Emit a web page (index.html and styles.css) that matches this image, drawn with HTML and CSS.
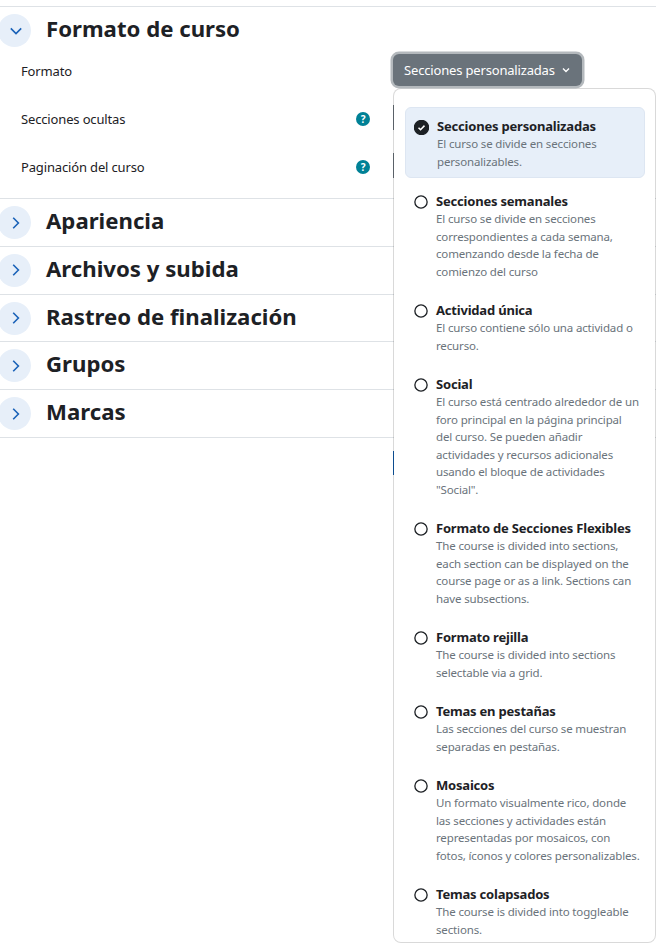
FILE: index.html
```html
<!DOCTYPE html>
<html lang="es">
<head>
  <meta charset="UTF-8" />
  <title>Formato de curso</title>
  <link rel="stylesheet" href="styles.css">
</head>
<body>

<main class="settings">
  <section class="group open">
    <div class="group-head">
      <span class="toggle"><svg viewBox="0 0 16 16"><path d="M2.8 5.4 8 10.6 13.2 5.4"/></svg></span>
      <h2>Formato de curso</h2>
    </div>
    <div class="form-row first">
      <span class="label">Formato</span>
      <span class="help-slot"></span>
      <div class="control">
        <button class="format-btn">Secciones personalizadas <svg viewBox="0 0 10 10"><path d="M2 3.5 5 6.5 8 3.5"/></svg></button>
        <div class="format-menu">
          <div class="option active">
            <svg class="radio" viewBox="0 0 16 16"><circle class="fill" cx="8" cy="8" r="7.5"/><path class="tick" d="M4.8 8.2 7 10.3 11.2 6"/></svg>
            <div><h3>Secciones personalizadas</h3><p>El curso se divide en secciones<br>personalizables.</p></div>
          </div>
          <div class="option">
            <svg class="radio" viewBox="0 0 16 16"><circle cx="8" cy="8" r="7"/></svg>
            <div><h3>Secciones semanales</h3><p>El curso se divide en secciones<br>correspondientes a cada semana,<br>comenzando desde la fecha de<br>comienzo del curso</p></div>
          </div>
          <div class="option">
            <svg class="radio" viewBox="0 0 16 16"><circle cx="8" cy="8" r="7"/></svg>
            <div><h3>Actividad única</h3><p>El curso contiene sólo una actividad o<br>recurso.</p></div>
          </div>
          <div class="option">
            <svg class="radio" viewBox="0 0 16 16"><circle cx="8" cy="8" r="7"/></svg>
            <div><h3>Social</h3><p>El curso está centrado alrededor de un<br>foro principal en la página principal<br>del curso. Se pueden añadir<br>actividades y recursos adicionales<br>usando el bloque de actividades<br>"Social".</p></div>
          </div>
          <div class="option">
            <svg class="radio" viewBox="0 0 16 16"><circle cx="8" cy="8" r="7"/></svg>
            <div><h3>Formato de Secciones Flexibles</h3><p>The course is divided into sections,<br>each section can be displayed on the<br>course page or as a link. Sections can<br>have subsections.</p></div>
          </div>
          <div class="option">
            <svg class="radio" viewBox="0 0 16 16"><circle cx="8" cy="8" r="7"/></svg>
            <div><h3>Formato rejilla</h3><p>The course is divided into sections<br>selectable via a grid.</p></div>
          </div>
          <div class="option">
            <svg class="radio" viewBox="0 0 16 16"><circle cx="8" cy="8" r="7"/></svg>
            <div><h3>Temas en pestañas</h3><p>Las secciones del curso se muestran<br>separadas en pestañas.</p></div>
          </div>
          <div class="option">
            <svg class="radio" viewBox="0 0 16 16"><circle cx="8" cy="8" r="7"/></svg>
            <div><h3>Mosaicos</h3><p>Un formato visualmente rico, donde<br>las secciones y actividades están<br>representadas por mosaicos, con<br>fotos, íconos y colores personalizables.</p></div>
          </div>
          <div class="option">
            <svg class="radio" viewBox="0 0 16 16"><circle cx="8" cy="8" r="7"/></svg>
            <div><h3>Temas colapsados</h3><p>The course is divided into toggleable<br>sections.</p></div>
          </div>
        </div>
      </div>
    </div>
    <div class="form-row">
      <span class="label">Secciones ocultas</span>
      <span class="help-slot"><span class="help">?</span></span>
      <div class="control"><span class="peek"></span></div>
    </div>
    <div class="form-row">
      <span class="label">Paginación del curso</span>
      <span class="help-slot"><span class="help">?</span></span>
      <div class="control"><span class="peek"></span></div>
    </div>
  </section>

  <section class="group closed">
    <div class="group-head"><span class="toggle"><svg viewBox="0 0 16 16"><path d="M5.2 2.8 10.4 8 5.2 13.2"/></svg></span><h2>Apariencia</h2></div>
  </section>
  <section class="group closed">
    <div class="group-head"><span class="toggle"><svg viewBox="0 0 16 16"><path d="M5.2 2.8 10.4 8 5.2 13.2"/></svg></span><h2>Archivos y subida</h2></div>
  </section>
  <section class="group closed">
    <div class="group-head"><span class="toggle"><svg viewBox="0 0 16 16"><path d="M5.2 2.8 10.4 8 5.2 13.2"/></svg></span><h2>Rastreo de finalización</h2></div>
  </section>
  <section class="group closed">
    <div class="group-head"><span class="toggle"><svg viewBox="0 0 16 16"><path d="M5.2 2.8 10.4 8 5.2 13.2"/></svg></span><h2>Grupos</h2></div>
  </section>
  <section class="group closed">
    <div class="group-head"><span class="toggle"><svg viewBox="0 0 16 16"><path d="M5.2 2.8 10.4 8 5.2 13.2"/></svg></span><h2>Marcas</h2></div>
  </section>
  <div class="form-row after"><span class="label"></span><span class="help-slot"></span><div class="control"><span class="peek blue"></span></div></div>
</main>

</body>
</html>
```

FILE: styles.css
```css
html, body {
  margin: 0;
  height: 943px;
  overflow: hidden;
  background: #fff;
}
body {
  font-family: 'Noto Sans', sans-serif;
  color: #1d2125;
}
.settings {
  padding-top: 6px;
}
.group {
  border-top: 1px solid #dee2e6;
}
.group.open {
  padding-bottom: 7px;
}
.group.closed {
  height: 47.8px;
  box-sizing: border-box;
}
.group:last-of-type {
  height: 48.8px;
  border-bottom: 1px solid #dee2e6;
}
.group-head {
  display: flex;
  align-items: center;
  height: 47px;
  margin-left: -2px;
}
.toggle {
  display: flex;
  align-items: center;
  justify-content: center;
  box-sizing: border-box;
  width: 33px;
  height: 33px;
  padding-left: 3px;
  border-radius: 50%;
  background: #e7eff9;
  flex: none;
}
.toggle svg {
  width: 16px;
  height: 16px;
  fill: none;
  stroke: #1a62b8;
  stroke-width: 1.6;
}
h2 {
  margin: 0 0 3px 15px;
  font-size: 22.2px;
  line-height: 28px;
  font-weight: 700;
}
.form-row {
  display: flex;
  height: 48px;
  padding-left: 21px;
  font-size: 13px;
  line-height: 48px;
  letter-spacing: -0.15px;
}
.form-row.first {
  margin-top: -7px;
}
.label {
  width: 335px;
  flex: none;
}
.help-slot {
  width: 37px;
  flex: none;
  display: flex;
  align-items: center;
}
.help {
  width: 14px;
  height: 14px;
  border-radius: 50%;
  background: #008196;
  color: #fff;
  font-size: 10px;
  font-weight: 700;
  line-height: 14px;
  text-align: center;
}
.control {
  position: relative;
  flex: 1;
}
.peek {
  display: block;
  width: 1px;
  height: 25px;
  margin-top: 10px;
  background: #6a737b;
}
.peek.blue {
  height: 24px;
  margin-top: 13px;
  background: #0f5aa8;
}
.format-btn {
  position: relative;
  z-index: 6;
  display: flex;
  align-items: center;
  gap: 6px;
  height: 32px;
  margin-top: 7px;
  padding: 0 11px;
  border: 0;
  border-radius: 6px;
  background: #6a737b;
  box-shadow: 0 0 0 2.5px #b4b9bd;
  color: #fff;
  font: inherit;
  letter-spacing: -0.17px;
  white-space: nowrap;
}
.format-btn svg {
  width: 10px;
  height: 10px;
  fill: none;
  stroke: #fff;
  stroke-width: 1.4;
}
.format-menu {
  position: absolute;
  top: 41px;
  left: 0;
  z-index: 5;
  width: 263px;
  height: 855px;
  padding: 18px 10px 0 11px;
  box-sizing: border-box;
  background: #fff;
  background-clip: padding-box;
  border: 1px solid rgba(0, 0, 0, 0.15);
  border-radius: 8px;
  line-height: normal;
}
.option {
  display: flex;
  gap: 8px;
  padding: 9px 8px 7px;
  margin-bottom: 3px;
  border: 1px solid transparent;
  border-radius: 6px;
}
.option.active {
  margin-bottom: 4px;
  background: #e7eff9;
  border-color: #dde6f2;
}
.radio {
  width: 14px;
  height: 14px;
  margin-top: 3px;
  flex: none;
  fill: none;
  stroke: #1d2125;
  stroke-width: 1.5;
}
.active .radio {
  width: 15px;
  height: 15px;
}
.radio .fill {
  fill: #1d2125;
}
.radio .tick {
  stroke: #fff;
  stroke-width: 1.6;
}
.option h3 {
  margin: 0;
  font-size: 13px;
  line-height: 18px;
  font-weight: 700;
  letter-spacing: -0.2px;
}
.option p {
  margin: 0;
  font-size: 11.5px;
  line-height: 17.5px;
  letter-spacing: -0.15px;
  color: #6a737b;
  white-space: nowrap;
}
```
